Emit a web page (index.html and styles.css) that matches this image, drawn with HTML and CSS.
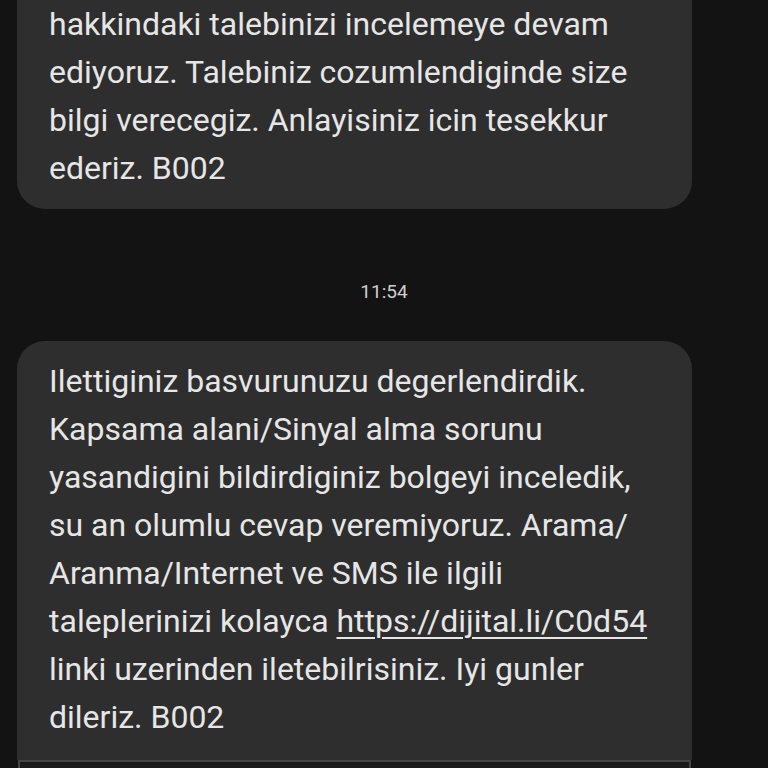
FILE: index.html
```html
<!DOCTYPE html>
<html>
<head>
<meta charset="utf-8">
<link rel="stylesheet" href="styles.css">
</head>
<body>
<div class="thread">
  <div class="bubble first">
    <p class="msg">hakkindaki talebinizi incelemeye devam<br>ediyoruz. Talebiniz cozumlendiginde size<br>bilgi verecegiz. Anlayisiniz icin tesekkur<br>ederiz. B002</p>
  </div>
  <div class="time">11:54</div>
  <div class="bubble second">
    <p class="msg">Ilettiginiz basvurunuzu degerlendirdik.<br>Kapsama alani/Sinyal alma sorunu<br>yasandigini bildirdiginiz bolgeyi inceledik,<br>su an olumlu cevap veremiyoruz. Arama/<br>Aranma/Internet ve SMS ile ilgili<br>taleplerinizi kolayca <a class="link" href="#">https://dijital.li/C0d54</a><br>linki uzerinden iletebilrisiniz. Iyi gunler<br>dileriz. B002</p>
  </div>
  <div class="under"></div>
</div>
</body>
</html>
```
FILE: styles.css
```css
html, body {
  margin: 0;
  padding: 0;
  background: #131313;
  height: 768px;
  overflow: hidden;
}
.thread {
  display: flex;
  flex-direction: column;
  font-family: Roboto, "Noto Sans", sans-serif;
}
.bubble {
  box-sizing: border-box;
  width: 675px;
  margin-left: 17px;
  background: #2e2e2e;
  border-radius: 28px;
  padding: 0 20px 0 32px;
}
.msg {
  margin: 0;
  font-size: 32px;
  line-height: 48px;
  color: #e6e6e6;
  white-space: nowrap;
}
.first {
  margin-top: -40px;
  padding-top: 40px;
  padding-bottom: 17px;
}
.time {
  text-align: center;
  font-size: 19px;
  color: #cfcfcf;
  height: 28px;
  line-height: 28px;
  margin-top: 69px;
}
.second {
  margin-top: 35px;
  padding-top: 16px;
  padding-bottom: 19px;
  border-radius: 28px 28px 0 0;
}
.link {
  color: #e6e6e6;
  text-decoration: underline;
  text-decoration-thickness: 2px;
  text-underline-offset: 5px;
}
.under {
  box-sizing: border-box;
  width: 673px;
  margin-left: 18px;
  height: 40px;
  background: #1b1b1b;
  border: 2px solid #454545;
  border-bottom: none;
}
```
